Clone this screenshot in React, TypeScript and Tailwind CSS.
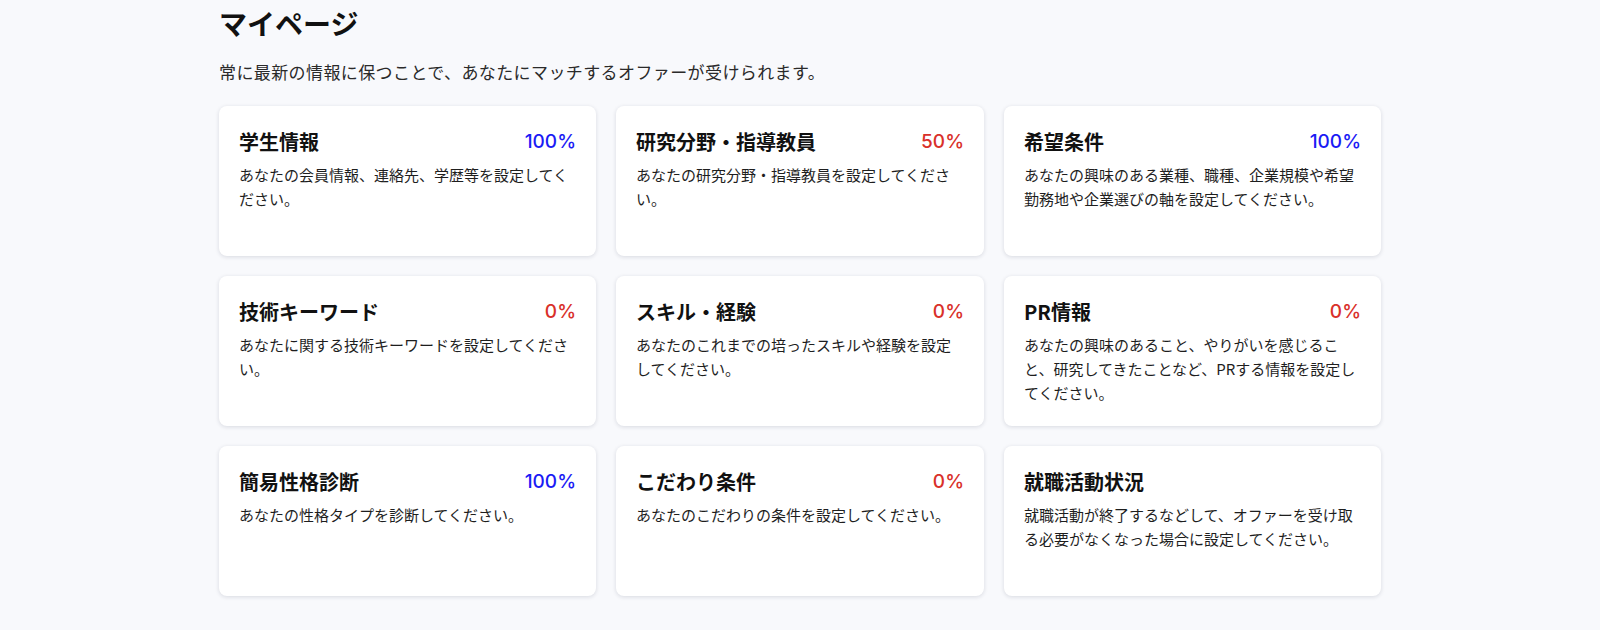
import React from "react"

type Item = {
  title: string
  rate?: number
  desc: string
}

const items: Item[] = [
  { title: "学生情報", rate: 100, desc: "あなたの会員情報、連絡先、学歴等を設定してください。" },
  { title: "研究分野・指導教員", rate: 50, desc: "あなたの研究分野・指導教員を設定してください。" },
  { title: "希望条件", rate: 100, desc: "あなたの興味のある業種、職種、企業規模や希望勤務地や企業選びの軸を設定してください。" },
  { title: "技術キーワード", rate: 0, desc: "あなたに関する技術キーワードを設定してください。" },
  { title: "スキル・経験", rate: 0, desc: "あなたのこれまでの培ったスキルや経験を設定してください。" },
  { title: "PR情報", rate: 0, desc: "あなたの興味のあること、やりがいを感じること、研究してきたことなど、PRする情報を設定してください。" },
  { title: "簡易性格診断", rate: 100, desc: "あなたの性格タイプを診断してください。" },
  { title: "こだわり条件", rate: 0, desc: "あなたのこだわりの条件を設定してください。" },
  { title: "就職活動状況", desc: "就職活動が終了するなどして、オファーを受け取る必要がなくなった場合に設定してください。" },
]

function Card({ item }: { item: Item }) {
  return (
    <div className="h-[150px] rounded-lg bg-white px-5 pt-5 shadow-[0_1px_4px_rgba(20,30,60,0.14)]">
      <div className="flex items-center justify-between">
        <h2 className="text-[20px] leading-8 font-bold text-[#111]">{item.title}</h2>
        {item.rate !== undefined && (
          <span
            className={
              item.rate === 100
                ? "font-['Inter',sans-serif] text-[19px] leading-8 font-medium text-[#1b1bf5]"
                : "font-['Inter',sans-serif] text-[19px] leading-8 font-medium text-[#d9302a]"
            }
          >
            {item.rate}%
          </span>
        )}
      </div>
      <p className="mt-[5px] text-[15px] leading-6 text-[#1e1e1e]">{item.desc}</p>
    </div>
  )
}

export default function App() {
  return (
    <div className="min-h-screen bg-[#f8f9fc] font-['Noto_Sans_CJK_JP','Noto_Sans',sans-serif]">
      <div className="mx-auto w-[1162px] pb-10">
        <h1 className="text-[28px] leading-[46px] font-bold text-[#111]">マイページ</h1>
        <p className="mt-[14px] text-[17px] leading-6 tracking-[0.4px] text-[#2a2a2a]">
          常に最新の情報に保つことで、あなたにマッチするオファーが受けられます。
        </p>
        <div className="mt-[22px] grid grid-cols-[377px_368px_377px] gap-5">
          {items.map((item) => (
            <Card key={item.title} item={item} />
          ))}
        </div>
      </div>
    </div>
  )
}
